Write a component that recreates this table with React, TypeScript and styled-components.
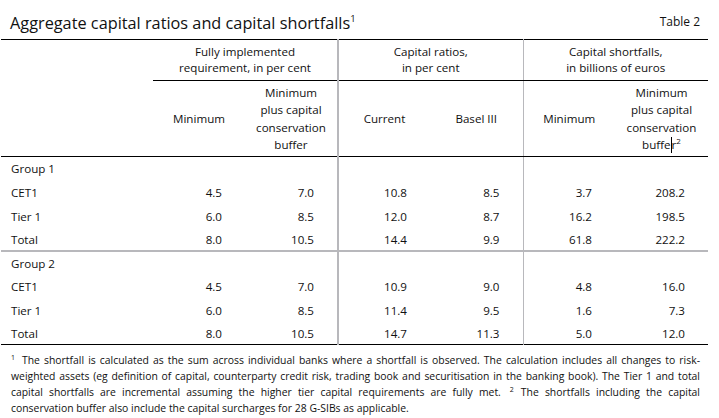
import React from "react";
import styled, { createGlobalStyle } from "styled-components";

const Global = createGlobalStyle`
  body {
    margin: 0;
    background: #fff;
    font-family: "Open Sans", "Liberation Sans", sans-serif;
    color: #111;
  }
`;

const Page = styled.div`
  width: 719px;
  height: 418px;
  padding: 0 11px 0 1px;
  box-sizing: border-box;
`;

const TitleBar = styled.div`
  display: flex;
  justify-content: space-between;
  align-items: flex-end;
  height: 39px;
  padding: 0 8px 0 9px;
  box-sizing: border-box;
`;

const Title = styled.h1`
  margin: 0 0 5px;
  font-size: 16.3px;
  font-weight: 400;
  sup {
    font-size: 9.5px;
    vertical-align: 7px;
    line-height: 0;
  }
`;

const TableNo = styled.span`
  font-size: 12px;
  margin-bottom: 9px;
`;

const Table = styled.table`
  width: 707px;
  border-collapse: collapse;
  table-layout: fixed;
  font-size: 11.6px;
  border-top: 1px solid #000;
  border-bottom: 1px solid #000;
`;

type Split = "thick" | "thin" | undefined;

const rule = (s: Split) =>
  s === "thick" ? "2px solid #b8b8bc" : s === "thin" ? "1px solid #b8b8bc" : "none";

const Corner = styled.th`
  padding: 0;
  border-bottom: 1px solid #000;
`;

const GroupHead = styled.th<{ $split?: Split }>`
  font-weight: 400;
  text-align: center;
  line-height: 16px;
  height: 40px;
  padding: 0;
  border-bottom: 1px solid #000;
  border-right: ${(p) => rule(p.$split)};
`;

const SubHead = styled.th<{ $split?: Split }>`
  font-weight: 400;
  text-align: center;
  line-height: 17.4px;
  height: 75px;
  padding: 0;
  border-bottom: 1px solid #000;
  border-right: ${(p) => rule(p.$split)};
  sup {
    font-size: 8px;
    vertical-align: 5px;
    line-height: 0;
  }
`;

const Cursor = styled.span`
  display: inline-block;
  width: 1px;
  height: 16px;
  background: #000;
  vertical-align: -4px;
`;

const Row = styled.tr<{ $last?: boolean; $sep?: boolean }>`
  height: ${(p) => (p.$last ? "22px" : "24px")};
  border-bottom: ${(p) => (p.$sep ? "2px solid #b8b8bc" : "none")};
`;

const Label = styled.td`
  padding: 0 0 0 10px;
  white-space: nowrap;
`;

const Num = styled.td<{ $split?: Split }>`
  text-align: right;
  padding: 0 23px 0 0;
  border-right: ${(p) => rule(p.$split)};
`;

const Notes = styled.p`
  margin: 7px 0 0;
  padding: 0 8px 0 10px;
  font-size: 10.4px;
  line-height: 16px;
  text-align: justify;
`;

const NoteMark = styled.span<{ $gap?: number }>`
  display: inline-block;
  font-size: 7px;
  line-height: 9px;
  vertical-align: top;
  margin: 1px 7px 0 ${(p) => p.$gap ?? 0}px;
`;

type DataRow = { label: string; v: string[] };

const groups: { name: string; rows: DataRow[] }[] = [
  {
    name: "Group 1",
    rows: [
      { label: "CET1", v: ["4.5", "7.0", "10.8", "8.5", "3.7", "208.2"] },
      { label: "Tier 1", v: ["6.0", "8.5", "12.0", "8.7", "16.2", "198.5"] },
      { label: "Total", v: ["8.0", "10.5", "14.4", "9.9", "61.8", "222.2"] },
    ],
  },
  {
    name: "Group 2",
    rows: [
      { label: "CET1", v: ["4.5", "7.0", "10.9", "9.0", "4.8", "16.0"] },
      { label: "Tier 1", v: ["6.0", "8.5", "11.4", "9.5", "1.6", "7.3"] },
      { label: "Total", v: ["8.0", "10.5", "14.7", "11.3", "5.0", "12.0"] },
    ],
  },
];

const splitAt = (i: number): Split => (i === 1 ? "thick" : i === 3 ? "thin" : undefined);

export default function App() {
  return (
    <>
      <Global />
      <Page>
        <TitleBar>
          <Title>
            Aggregate capital ratios and capital shortfalls<sup>1</sup>
          </Title>
          <TableNo>Table 2</TableNo>
        </TitleBar>
        <Table>
          <colgroup>
            <col style={{ width: 152 }} />
            <col style={{ width: 92 }} />
            <col style={{ width: 93 }} />
            <col style={{ width: 92 }} />
            <col style={{ width: 93 }} />
            <col style={{ width: 92 }} />
            <col style={{ width: 93 }} />
          </colgroup>
          <thead>
            <tr>
              <Corner rowSpan={2} />
              <GroupHead colSpan={2} $split="thick">
                Fully implemented
                <br />
                requirement, in per cent
              </GroupHead>
              <GroupHead colSpan={2} $split="thin">
                Capital ratios,
                <br />
                in per cent
              </GroupHead>
              <GroupHead colSpan={2}>
                Capital shortfalls,
                <br />
                in billions of euros
              </GroupHead>
            </tr>
            <tr>
              <SubHead>Minimum</SubHead>
              <SubHead $split="thick">
                Minimum
                <br />
                plus capital
                <br />
                conservation
                <br />
                buffer
              </SubHead>
              <SubHead>Current</SubHead>
              <SubHead $split="thin">Basel III</SubHead>
              <SubHead>Minimum</SubHead>
              <SubHead>
                Minimum
                <br />
                plus capital
                <br />
                conservation
                <br />
                buffe<Cursor />r<sup>2</sup>
              </SubHead>
            </tr>
          </thead>
          {groups.map((g) => (
            <tbody key={g.name}>
              <Row>
                <Label>{g.name}</Label>
                {[0, 1, 2, 3, 4, 5].map((i) => (
                  <Num key={i} $split={splitAt(i)} />
                ))}
              </Row>
              {g.rows.map((r, ri) => (
                <Row
                  key={r.label}
                  $last={ri === g.rows.length - 1}
                  $sep={ri === g.rows.length - 1 && g.name === "Group 1"}
                >
                  <Label>{r.label}</Label>
                  {r.v.map((v, i) => (
                    <Num key={i} $split={splitAt(i)}>
                      {v}
                    </Num>
                  ))}
                </Row>
              ))}
            </tbody>
          ))}
        </Table>
        <Notes>
          <NoteMark>1</NoteMark>The shortfall is calculated as the sum across individual banks where a shortfall is
          observed. The calculation includes all changes to risk-weighted assets (eg definition of capital,
          counterparty credit risk, trading book and securitisation in the banking book). The Tier 1 and total
          capital shortfalls are incremental assuming the higher tier capital requirements are fully met.
          <NoteMark $gap={9}>2</NoteMark>The shortfalls including the capital conservation buffer also include the
          capital surcharges for 28 G-SIBs as applicable.
        </Notes>
      </Page>
    </>
  );
}
